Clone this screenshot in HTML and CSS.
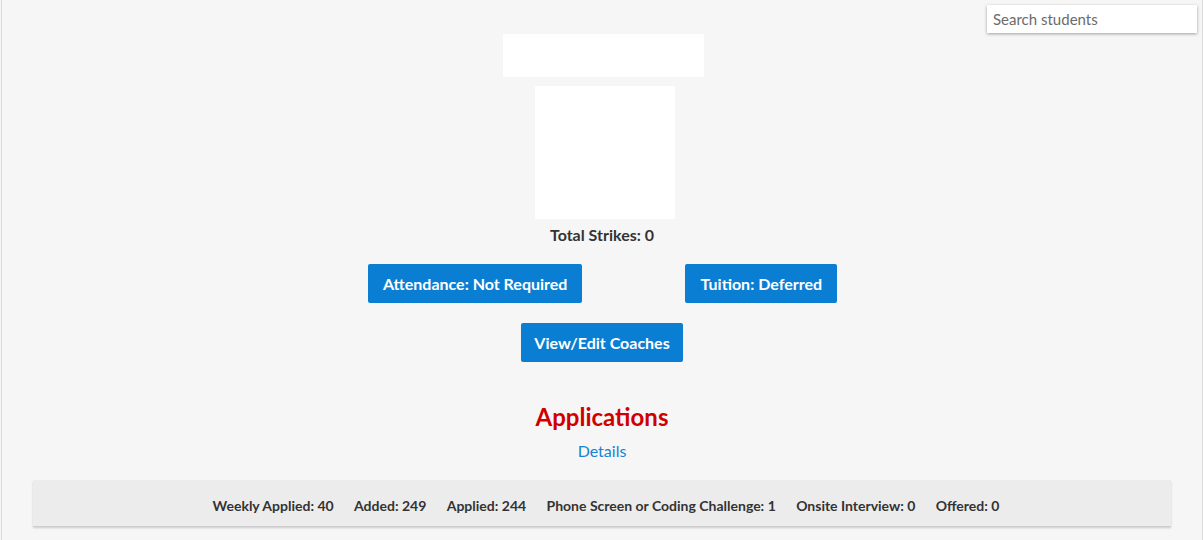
FILE: index.html
```html
<!DOCTYPE html>
<html>
<head>
<meta charset="utf-8">
<link rel="stylesheet" href="styles.css">
</head>
<body>
<div class="page">
  <input class="search" type="text" placeholder="Search students">
  <div class="profile">
    <div class="name-box"></div>
    <div class="photo-box"></div>
    <div class="strikes">Total Strikes: 0</div>
    <div class="btn-row btn-row-split">
      <button class="btn">Attendance: Not Required</button>
      <button class="btn">Tuition: Deferred</button>
    </div>
    <div class="btn-row">
      <button class="btn btn-narrow">View/Edit Coaches</button>
    </div>
    <h2 class="apps-title">Applications</h2>
    <a class="details" href="#">Details</a>
  </div>
  <div class="stats">
    <span>Weekly Applied: 40</span>
    <span>Added: 249</span>
    <span>Applied: 244</span>
    <span>Phone Screen or Coding Challenge: 1</span>
    <span>Onsite Interview: 0</span>
    <span>Offered: 0</span>
  </div>
</div>
</body>
</html>
```
FILE: styles.css
```css
html, body {
  margin: 0;
  padding: 0;
  background: #f6f6f6;
  font-family: Lato, "Open Sans", sans-serif;
  color: #333;
}
body {
  padding-left: 1px;
  height: 540px;
  overflow: hidden;
}
.page {
  position: relative;
  width: 1202px;
  height: 540px;
  border-left: 1px solid #dcdcdc;
  border-right: 1px solid #dcdcdc;
  box-sizing: border-box;
  padding: 34px 30px 0 30px;
  background: #f6f6f6;
}
.search {
  position: absolute;
  top: 5px;
  right: 5px;
  width: 210px;
  height: 28px;
  box-sizing: border-box;
  border: none;
  background: #fff;
  box-shadow: 0 1px 3px rgba(0,0,0,0.35);
  padding: 0 6px;
  font-family: Lato, sans-serif;
  font-size: 15px;
  color: #333;
  outline: none;
}
.search::placeholder {
  color: #6b6b6b;
}
.profile {
  display: flex;
  flex-direction: column;
  align-items: center;
}
.name-box {
  width: 201px;
  height: 43px;
  background: #fff;
  margin-left: 3px;
}
.photo-box {
  width: 140px;
  height: 133px;
  background: #fff;
  margin-top: 9px;
  margin-left: 6px;
}
.strikes {
  font-weight: 700;
  font-size: 16px;
  line-height: 20px;
  margin-top: 6px;
}
.btn-row {
  display: flex;
  justify-content: center;
  gap: 103px;
  margin-top: 20px;
}
.btn-row-split {
  margin-top: 19px;
  margin-left: 1px;
}
.btn {
  background: #0a7ed2;
  color: #fff;
  border: none;
  border-radius: 2px;
  height: 39px;
  padding: 0 15px;
  font-family: Lato, sans-serif;
  font-weight: 700;
  font-size: 16px;
  cursor: pointer;
}
.btn-narrow {
  padding: 0 13px;
}
.apps-title {
  color: #d00000;
  font-size: 24px;
  font-weight: 700;
  margin: 40px 0 0 0;
  line-height: 30px;
}
.details {
  color: #1a80d4;
  font-size: 16px;
  text-decoration: none;
  margin-top: 9px;
  line-height: 20px;
}
.stats {
  margin: 19px 1px 0 1px;
  height: 46px;
  background: #ececec;
  box-shadow: 0 2px 2px rgba(0,0,0,0.18);
  display: flex;
  justify-content: center;
  align-items: center;
  gap: 20.4px;
  font-weight: 700;
  font-size: 14px;
  color: #333;
  padding-top: 4px;
  padding-left: 8px;
  box-sizing: border-box;
}
```
